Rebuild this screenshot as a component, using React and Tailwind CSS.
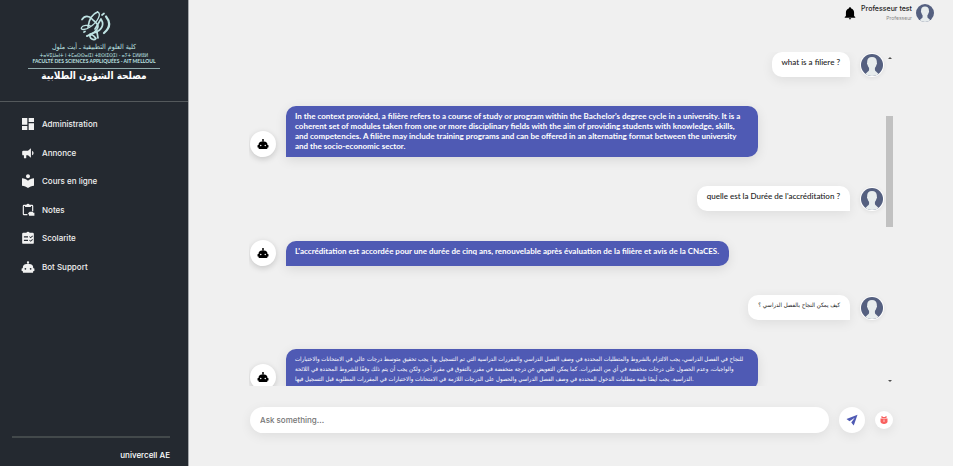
import { MdDashboard, MdLocalLibrary } from "react-icons/md";

const LATIN = "font-[Inter,'DejaVu_Sans',sans-serif]";
const CHAT = "font-[Lato,'DejaVu_Sans',sans-serif]";
const ARABIC = "font-['DejaVu_Sans_Condensed','DejaVu_Sans',sans-serif]";

function Glyph({ d, className, evenOdd }) {
  return (
    <svg viewBox="0 0 24 24" fill="currentColor" fillRule={evenOdd ? "evenodd" : "nonzero"} className={className} aria-hidden="true">
      <path d={d} />
    </svg>
  );
}

const BELL =
  "M21,19V20H3V19L5,17V11C5,7.9 7.03,5.17 10,4.29C10,4.19 10,4.1 10,4A2,2 0 0,1 12,2A2,2 0 0,1 14,4C14,4.1 14,4.19 14,4.29C16.97,5.17 19,7.9 19,11V17L21,19M14,21A2,2 0 0,1 12,23A2,2 0 0,1 10,21";
const ROBOT =
  "M12,2A2,2 0 0,1 14,4C14,4.74 13.6,5.39 13,5.73V7H14A7,7 0 0,1 21,14H22A1,1 0 0,1 23,15V18A1,1 0 0,1 22,19H21V20A2,2 0 0,1 19,22H5A2,2 0 0,1 3,20V19H2A1,1 0 0,1 1,18V15A1,1 0 0,1 2,14H3A7,7 0 0,1 10,7H11V5.73C10.4,5.39 10,4.74 10,4A2,2 0 0,1 12,2M7.5,13.5A1.5,1.5 0 0,0 6,15A1.5,1.5 0 0,0 7.5,16.5A1.5,1.5 0 0,0 9,15A1.5,1.5 0 0,0 7.5,13.5M16.5,13.5A1.5,1.5 0 0,0 15,15A1.5,1.5 0 0,0 16.5,16.5A1.5,1.5 0 0,0 18,15A1.5,1.5 0 0,0 16.5,13.5Z";
const BULLHORN =
  "M12,8H4A2,2 0 0,0 2,10V14A2,2 0 0,0 4,16H5V20A1,1 0 0,0 6,21H8A1,1 0 0,0 9,20V16H12L17,20V4L12,8M21.5,12C21.5,13.71 20.54,15.26 19,16V8C20.53,8.75 21.5,10.3 21.5,12Z";
const CLIPBOARD_HAND =
  "M5 3h4.2a3 3 0 0 1 5.6 0H19a2 2 0 0 1 2 2v9h-2V5h-2v2H7V5H5v14h6v2H5a2 2 0 0 1-2-2V5a2 2 0 0 1 2-2zM12 17.5l3-2.5h4.5a1.5 1.5 0 0 1 1.5 1.5h2V22h-7.5a2 2 0 0 1-2-2z";
const CHECKLIST =
  "M4 3h5.2a3 3 0 0 1 5.6 0H20a2 2 0 0 1 2 2v15a2 2 0 0 1-2 2H4a2 2 0 0 1-2-2V5a2 2 0 0 1 2-2zM5 9v2h7V9zM5 15v2h7v-2zM14 10l2.5 2.5L20.5 9l-1.2-1.2-2.8 2.7-1.3-1.3zM14 16l2.5 2.5L20.5 15l-1.2-1.2-2.8 2.7-1.3-1.3z";

const MENU = [
  { label: "Administration", icon: <MdDashboard className="size-4" /> },
  { label: "Annonce", icon: <Glyph d={BULLHORN} className="size-3.5" /> },
  { label: "Cours en ligne", icon: <MdLocalLibrary className="size-4" /> },
  { label: "Notes", icon: <Glyph d={CLIPBOARD_HAND} evenOdd className="size-3.5" /> },
  { label: "Scolarite", icon: <Glyph d={CHECKLIST} evenOdd className="size-3.5" /> },
  { label: "Bot Support", icon: <Glyph d={ROBOT} className="size-3.5" /> },
];

function Logo() {
  return (
    <svg viewBox="0 0 34 32" className="h-8 w-[34px]" fill="none" stroke="#bfe3e3" strokeLinecap="round" strokeLinejoin="round" aria-label="Logo" role="img">
      <path d="M20.5 2C15 4 12 10 11 17" strokeWidth="1.7" />
      <path d="M20.5 2C25 3 21 12 13 17C9 20 3 20.5 4.5 17.5C6 15 11 15 14 16" strokeWidth="1.3" />
      <path d="M5 9.5C8 5 12 6 15 9C18 12 21 14 21 16C21 20 15 25 10 26" strokeWidth="1.7" />
      <path d="M24 9L18 19M24.5 10C27.5 15 24 21 18 22" strokeWidth="1.7" />
      <path d="M10 26C15 23 17 26 19 28.5C17 31 12 29 13 24L20 22L21 28" strokeWidth="1.7" />
      <path d="M29 6.5C33.5 12 33 18 27 23" strokeWidth="2.2" />
      <path d="M25 5L27 3.5M7 22l1-.5" strokeWidth="1.7" />
    </svg>
  );
}

function UserAvatar({ className }) {
  return (
    <svg viewBox="0 0 24 24" className={className} role="img" aria-label="Professeur test">
      <defs>
        <clipPath id="face-clip">
          <circle cx="12" cy="12" r="12" />
        </clipPath>
      </defs>
      <g clipPath="url(#face-clip)">
        <rect width="24" height="24" fill="#556080" />
        <path
          d="M12 3.2c3.800 0 5.600 2.300 5.200 6 .5.4.3 2-.4 2.600-.2 1.500-.9 2.600-1.600 3.200v2.600c.5 1.400 2.300 1.800 3.800 3.900V25H5v-3.500c1.500-2.100 3.300-2.500 3.800-3.900V15c-.7-.6-1.400-1.700-1.600-3.200-.7-.6-.9-2.200-.4-2.600-.4-3.700 1.400-6 5.200-6z"
          fill="#e7eced"
        />
      </g>
    </svg>
  );
}

function UserMessage({ children, arabic }) {
  return (
    <li className="flex items-center justify-end gap-2.5">
      <p
        className={
          "min-h-[25px] rounded-[10px] rounded-br-none bg-white px-2.5 pt-[5px] pb-1.5 leading-[10px] whitespace-nowrap text-[#222] shadow-[0_3px_12px_rgba(0,0,0,0.08)] " +
          (arabic ? "text-[6px] " + ARABIC : "text-[8px] font-medium " + CHAT)
        }
      >
        {children}
      </p>
      <span className="rounded-full bg-white p-px shadow-[0_1px_4px_rgba(0,0,0,0.08)]">
        <UserAvatar className="size-[22px]" />
      </span>
    </li>
  );
}

function BotMessage({ lines, arabic }) {
  return (
    <li className="flex items-end gap-2.5">
      <span className="grid size-[26px] shrink-0 place-items-center rounded-full bg-white text-black shadow-[0_2px_6px_rgba(0,0,0,0.18)]">
        <Glyph d={ROBOT} className="size-3" />
      </span>
      <p
        className={
          "min-h-[25px] max-w-[472px] rounded-[10px] rounded-bl-none bg-[#4f5ab4] pt-[5px] pr-2.5 pb-1.5 pl-[9px] leading-[10px] whitespace-nowrap text-white shadow-[0_3px_12px_rgba(0,0,0,0.1)] " +
          (lines.length > 1 ? "w-full " : "") +
          (arabic ? "text-[6px] " + ARABIC : "text-[8px] font-bold " + CHAT)
        }
      >
        {lines.map((line) => (
          <span key={line} className="block">
            {line}
          </span>
        ))}
      </p>
    </li>
  );
}

function Sidebar() {
  return (
    <aside className="flex w-[189px] shrink-0 flex-col border-r border-[#a5a8ab] bg-[#242930] text-white">
      <div className="flex h-[102px] flex-col items-center border-b border-[#54595c] pt-2.5 whitespace-nowrap">
        <Logo />
        <div className={"flex flex-col items-center text-[#bfe3e3] " + ARABIC}>
          <p className="text-[7px] leading-[10px]" dir="rtl">كلية العلوم التطبيقية ـ أيت ملول</p>
          <p className="text-[5px] leading-[6px]">ⵜⴰⵖⵉⵡⴰⵏⵜ ⵏ ⵜⵎⴰⵙⵙⴰⵏⵉⵏ ⵜⵓⵙⵏⵉⵙⵉⵏ - ⴰⵢⵜ ⵎⵍⵍⵓⵍ</p>
          <p className="font-[Lato,sans-serif] text-[5px] leading-[7px] font-bold">FACULTÉ DES SCIENCES APPLIQUÉES - AIT MELLOUL</p>
        </div>
        <p className={"mt-[3px] w-[132px] border-t border-[#8fa9aa] text-center text-[10px] leading-[14px] font-bold " + ARABIC} dir="rtl">
          مصلحة الشؤون الطلابية
        </p>
      </div>
      <nav className="pt-2">
        <ul className="flex h-[171px] flex-col justify-between">
          {MENU.map((item) => (
            <li key={item.label}>
              <a href="#" className="flex h-7 items-center gap-1.5 pl-5 text-[8px] font-medium text-[#f1f1f1]">
                <span className="grid size-4 place-items-center">{item.icon}</span>
                {item.label}
              </a>
            </li>
          ))}
        </ul>
      </nav>
      <p className="mt-auto mr-[18px] ml-3 border-t-2 border-[#43494b] pt-2.5 pb-1 text-right text-[8px] leading-[14px] font-medium">univercell AE</p>
    </aside>
  );
}

export default function App() {
  return (
    <div className={"flex h-screen overflow-hidden bg-[#f0f0f0] " + LATIN}>
      <Sidebar />
      <main className="flex min-w-0 flex-1 flex-col">
        <header className="flex items-center justify-end gap-1 pt-1 pr-[19px]">
          <button type="button" aria-label="Notifications">
            <Glyph d={BELL} className="size-3.5 text-black" />
          </button>
          <div className="text-right">
            <p className="text-[7px] leading-[10px] font-medium text-[#222]">Professeur test</p>
            <p className="text-[5px] leading-2 text-[#888]">Professeur</p>
          </div>
          <UserAvatar className="size-[18px]" />
        </header>

        <section className="mx-15 mt-[30px] flex h-[334px] overflow-hidden" aria-label="Conversation">
          <ul className="flex flex-1 flex-col gap-[29px] pl-px">
            <UserMessage>what is a filiere ?</UserMessage>
            <BotMessage
              lines={[
                "In the context provided, a filière refers to a course of study or program within the Bachelor's degree cycle in a university. It is a",
                "coherent set of modules taken from one or more disciplinary fields with the aim of providing students with knowledge, skills,",
                "and competencies. A filière may include training programs and can be offered in an alternating format between the university",
                "and the socio-economic sector.",
              ]}
            />
            <UserMessage>quelle est la Durée de l'accréditation ?</UserMessage>
            <BotMessage lines={["L'accréditation est accordée pour une durée de cinq ans, renouvelable après évaluation de la filière et avis de la CNaCES."]} />
            <UserMessage arabic>كيف يمكن النجاح بالفصل الدراسي ؟</UserMessage>
            <BotMessage
              arabic
              lines={[
                "للنجاح في الفصل الدراسي، يجب الالتزام بالشروط والمتطلبات المحددة في وصف الفصل الدراسي والمقررات الدراسية التي تم التسجيل بها. يجب تحقيق متوسط درجات عالي في الامتحانات والاختبارات",
                "والواجبات، وعدم الحصول على درجات منخفضة في أي من المقررات. كما يمكن التعويض عن درجة منخفضة في مقرر بالتفوق في مقرر آخر، ولكن يجب أن يتم ذلك وفقًا للشروط المحددة في اللائحة",
                "الدراسية. يجب أيضًا تلبية متطلبات الدخول المحددة في وصف الفصل الدراسي والحصول على الدرجات اللازمة في الامتحانات والاختبارات في المقررات المطلوبة قبل التسجيل فيها.",
              ]}
            />
          </ul>
          <div className="ml-0.5 flex w-[7px] flex-col items-center justify-between py-1 text-[#505050]" aria-hidden="true">
            <svg viewBox="0 0 4 2" className="mt-px h-0.5 w-1" fill="currentColor"><path d="M0 2L2 0L4 2z" /></svg>
            <span className="mb-[97px] h-[111px] w-full bg-[#c1c1c1]" />
            <svg viewBox="0 0 4 2" className="h-0.5 w-1" fill="currentColor"><path d="M0 0L2 2L4 0z" /></svg>
          </div>
        </section>

        <form className="mx-15 mt-[21px] flex items-center gap-2.5 pl-px" onSubmit={(event) => event.preventDefault()}>
          <input
            type="text"
            aria-label="Ask something"
            placeholder="Ask something..."
            className="h-[26px] min-w-0 flex-1 rounded-full bg-white px-2.5 text-[8px] font-medium text-[#222] shadow-[0_3px_12px_rgba(0,0,0,0.08)] outline-none placeholder:text-[#757575]"
          />
          <button type="submit" aria-label="Send" className="grid size-[26px] place-items-center rounded-full bg-white text-[#4f5ab4] shadow-[0_3px_12px_rgba(0,0,0,0.08)]">
            <Glyph d="M23 1.5L1 10L7 14.5L17.500 7.500L10.500 17L15.500 23z" className="size-3" />
          </button>
          <button type="button" aria-label="Clear" className="grid size-[18px] place-items-center rounded-full bg-white text-[#f9605f] shadow-[0_3px_12px_rgba(0,0,0,0.08)]">
            <svg viewBox="0 0 16 16" className="size-2" fill="currentColor"><path d="M3 0h2v2h6V0h2v4H3z" /><path d="M1 5h14v6c0 3-3 5-7 5s-7-2-7-5z" /><path d="M7.300 7h1.400v5H7.300z" fill="white" /></svg>
          </button>
        </form>
      </main>
    </div>
  );
}
